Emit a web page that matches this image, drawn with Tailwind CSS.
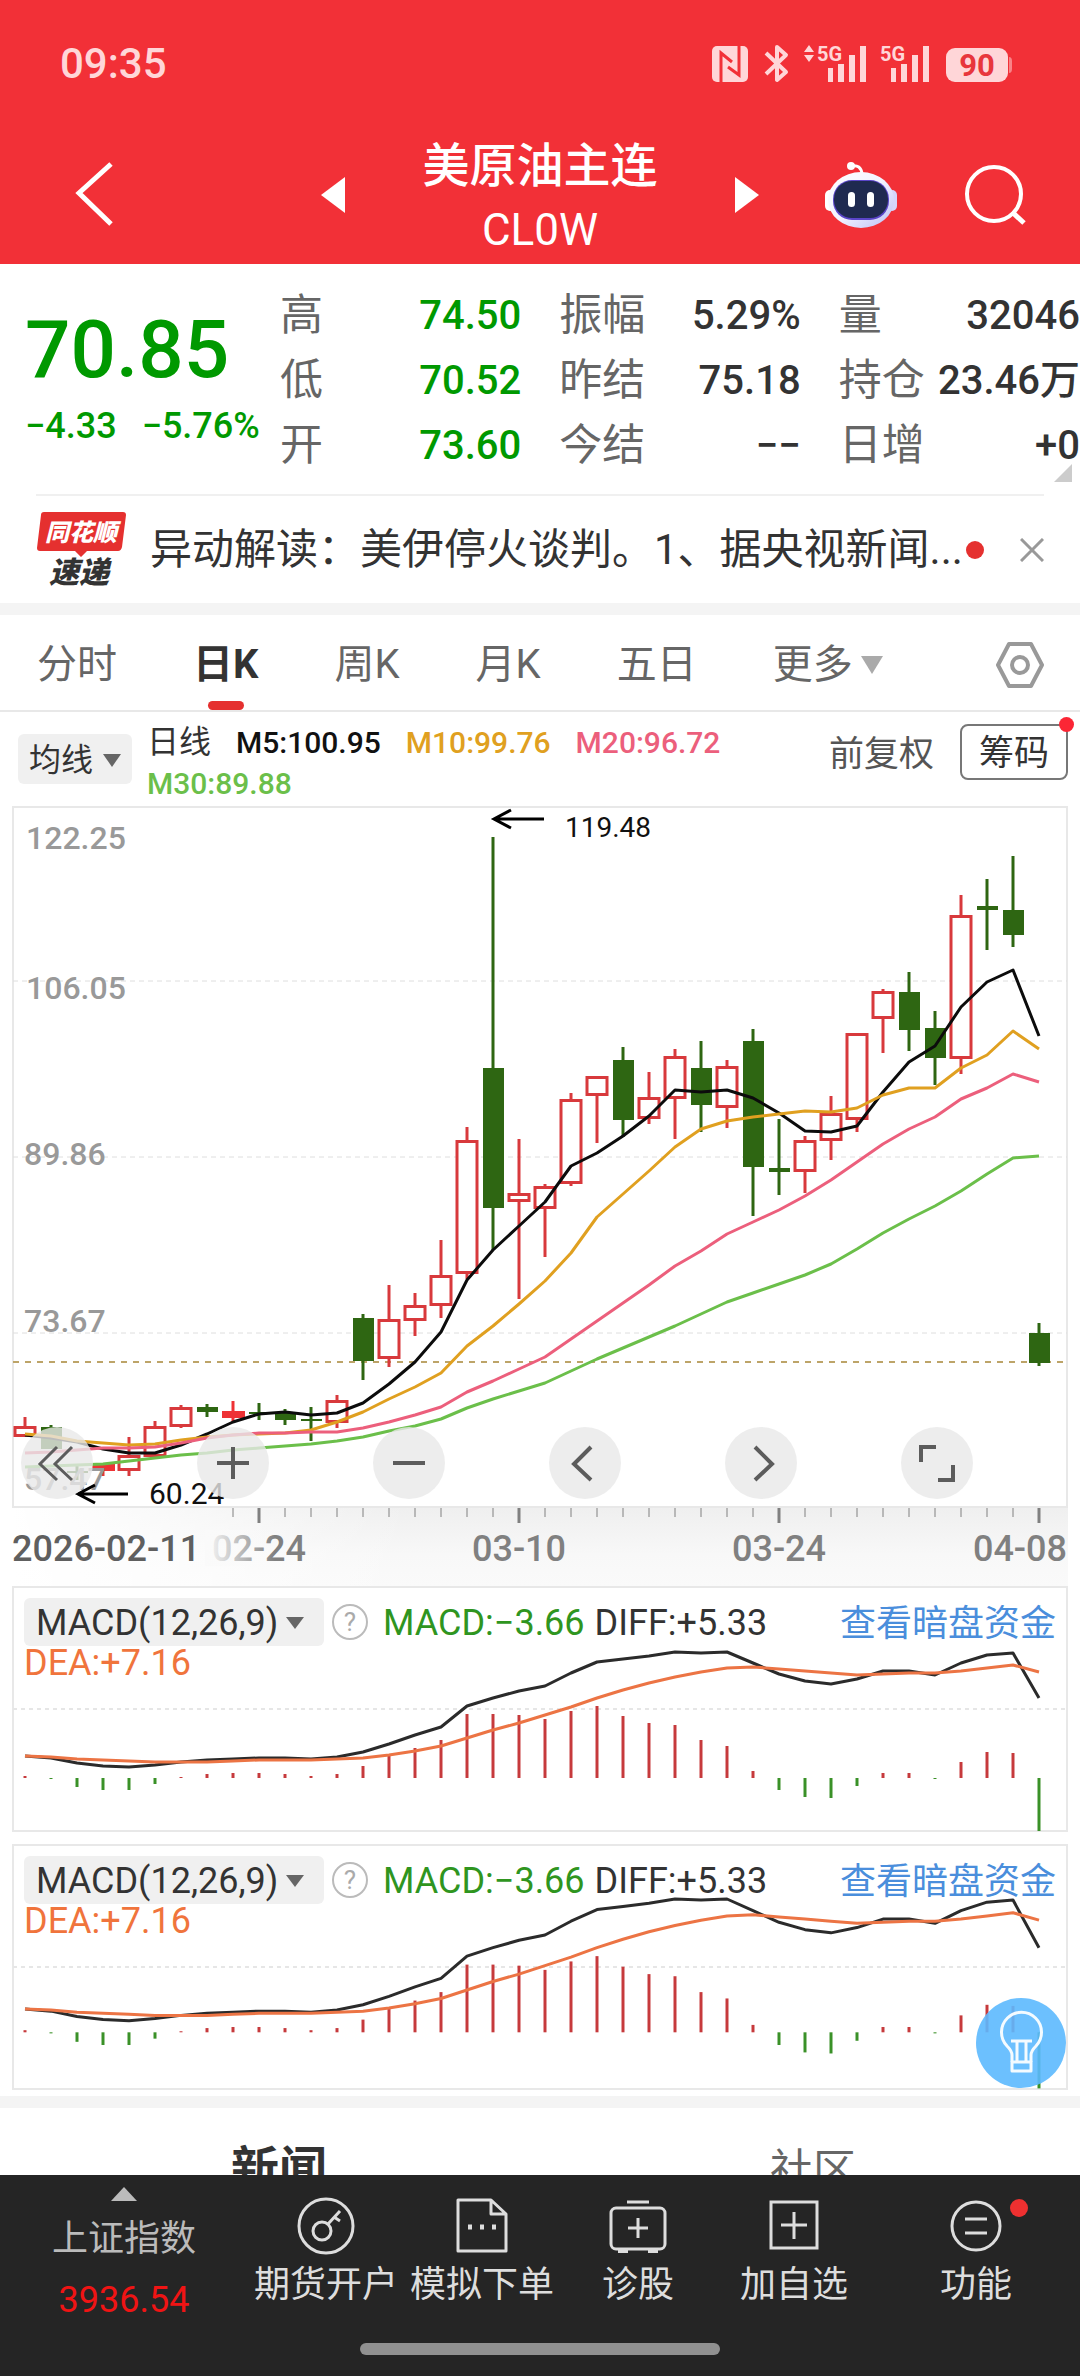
<!DOCTYPE html>
<html lang="zh-CN">
  <head>
    <meta charset="UTF-8" />
    <meta name="viewport" content="width=device-width, initial-scale=1.0" />
    <title>美原油主连 CL0W</title>
    <script src="https://cdn.jsdelivr.net/npm/@tailwindcss/browser@4"></script>
  </head>
  <body class="min-h-screen overflow-x-hidden bg-white font-['Roboto','Noto_Sans_CJK_SC',sans-serif] text-[#333]">
    <header class="h-[264px] bg-[#f23037] text-white">
      <!-- ステータスバー -->
      <div class="flex h-[128px] items-center justify-between pl-[60px] pr-[66px] text-[#ffd6d8]">
        <span class="text-[42px] font-medium leading-none">09:35</span>
        <svg class="h-[52px] w-[302px]" viewBox="712 38 302 52" fill="currentColor">
          <rect x="712" y="46" width="36" height="36" rx="5" />
          <path d="M721 82V53l11 9M739 46v29l-11-8" fill="none" stroke="#f23037" stroke-width="3" />
          <path d="M766 53l20 19-9 8V47l9 8-20 19" fill="none" stroke="currentColor" stroke-width="4" stroke-linejoin="round" />
          <path d="M804 52l5-7 5 7zM804 55l5 7 5-7z" />
          <text x="817" y="61" font-size="20" font-weight="700">5G</text>
          <path d="M828 68h5v14h-5zM838 64h6v18h-6zM849 55h6v27h-6zM860 46h6v36h-6z" />
          <text x="880" y="61" font-size="20" font-weight="700">5G</text>
          <path d="M891 68h5v14h-5zM901 64h6v18h-6zM912 55h6v27h-6zM923 46h6v36h-6z" />
          <rect x="946" y="48" width="62" height="34" rx="9" />
          <path d="M1009 57q3 0 3 4v8q0 4-3 4z" opacity=".5" />
          <text x="977" y="76" font-size="31" font-weight="700" text-anchor="middle" fill="#e8363c">90</text>
        </svg>
      </div>
      <div class="grid h-[130px] grid-cols-[300fr_480fr_300fr] items-center">
        <button aria-label="返回" class="ml-[70px] w-12">
          <svg class="h-[70px] w-12" viewBox="0 0 48 70" fill="none" stroke="currentColor" stroke-width="5"><path d="M41 4L9 33l32 31" /></svg>
        </button>
        <div class="flex items-center justify-between px-[21px]">
          <button aria-label="上一个"><svg class="h-9 w-6" viewBox="0 0 24 36" fill="currentColor"><path d="M24 0v36L0 18z" /></svg></button>
          <h1 class="pt-[6px] text-center text-[47px] font-medium leading-[64px]">
            美原油主连
            <span class="block text-[44px] font-normal">CL0W</span>
          </h1>
          <button aria-label="下一个"><svg class="h-9 w-6" viewBox="0 0 24 36" fill="currentColor"><path d="M0 0v36l24-18z" /></svg></button>
        </div>
        <div class="flex items-center justify-between pl-[44px] pr-[54px]">
          <button aria-label="智能助手">
            <svg class="h-[68px] w-[74px]" viewBox="0 0 74 68">
              <defs>
                <linearGradient id="shell" x1="0" y1="0" x2="1" y2="1">
                  <stop offset="0" stop-color="#fff" />
                  <stop offset=".5" stop-color="#f3f3ff" />
                  <stop offset="1" stop-color="#b9bdf6" />
                </linearGradient>
              </defs>
              <circle cx="27" cy="5" r="4" fill="#fff" />
              <path d="M27 5q10 -2 11 8" fill="none" stroke="#fff" stroke-width="3" />
              <rect x="1" y="29" width="10" height="21" rx="5" fill="#fff" />
              <rect x="63" y="29" width="10" height="21" rx="5" fill="#d6d6fb" />
              <ellipse cx="37" cy="39" rx="33" ry="28" fill="url(#shell)" />
              <rect x="9" y="19" width="56" height="40" rx="19" fill="#5a45c8" />
              <rect x="10" y="20" width="54" height="37" rx="18" fill="#1f2a50" />
              <rect x="24" y="31" width="7" height="15" rx="3.5" fill="#fff" />
              <rect x="43" y="31" width="7" height="15" rx="3.5" fill="#fff" />
            </svg>
          </button>
          <button aria-label="搜索">
            <svg class="h-16 w-[62px]" viewBox="0 0 62 64" fill="none" stroke="currentColor" stroke-width="4"><circle cx="30" cy="31" r="27" /><path d="M48 49l12 11" stroke-width="5" /></svg>
          </button>
        </div>
      </div>
    </header>

    <main class="pb-[170px]">
      <!-- 価格サマリー -->
      <section class="relative flex pt-[19px]">
        <div class="w-[280px] shrink-0 whitespace-nowrap pl-[25px] text-[#009900]">
          <p class="pt-[18px] text-[80px] font-medium leading-[98px]">70.85</p>
          <p class="flex gap-[25px] pt-[15px] text-[36px] font-medium leading-[24px]"><span>−4.33</span><span>−5.76%</span></p>
        </div>
        <div class="grid flex-1 grid-cols-3 gap-x-[38px] whitespace-nowrap text-[40px] font-medium leading-[65px]">
          <dl class="grid grid-cols-[auto_1fr] text-right text-[#009900]">
            <dt class="text-left text-[43px] font-normal text-[#666]">高</dt><dd>74.50</dd>
            <dt class="text-left text-[43px] font-normal text-[#666]">低</dt><dd>70.52</dd>
            <dt class="text-left text-[43px] font-normal text-[#666]">开</dt><dd>73.60</dd>
          </dl>
          <dl class="grid grid-cols-[auto_1fr] text-right">
            <dt class="text-left text-[43px] font-normal text-[#666]">振幅</dt><dd>5.29%</dd>
            <dt class="text-left text-[43px] font-normal text-[#666]">昨结</dt><dd>75.18</dd>
            <dt class="text-left text-[43px] font-normal text-[#666]">今结</dt><dd>−−</dd>
          </dl>
          <dl class="grid grid-cols-[auto_1fr] text-right">
            <dt class="text-left text-[43px] font-normal text-[#666]">量</dt><dd>32046</dd>
            <dt class="text-left text-[43px] font-normal text-[#666]">持仓</dt><dd>23.46万</dd>
            <dt class="text-left text-[43px] font-normal text-[#666]">日增</dt><dd>+0</dd>
          </dl>
        </div>
        <svg class="absolute -bottom-[4px] right-2 size-[18px]" viewBox="0 0 18 18" fill="#ccc"><path d="M18 0v18H0z" /></svg>
      </section>

      <!-- ニュース速報 -->
      <section class="mx-9 mt-[16px] flex h-[109px] items-center border-t-2 border-[#f0f0f0]">
        <svg class="h-[86px] w-[90px] shrink-0" viewBox="0 -4 90 86">
          <path d="M8 1h79q3 0 3 3l-4 32q-1 4-4 4H51l-6 6-6-6H4q-3 0-3-3L5 4q0-3 3-3z" fill="#e5302f" />
          <text x="45" y="30" font-size="24" font-weight="900" font-style="italic" text-anchor="middle" fill="#fff">同花顺</text>
          <text x="43" y="72" font-size="30" font-weight="900" font-style="italic" text-anchor="middle" fill="#333">速递</text>
        </svg>
        <a href="#" class="ml-[24px] flex-1 whitespace-nowrap text-[42px] leading-[60px]">异动解读：美伊停火谈判。1、据央视新闻...</a>
        <span class="size-[18px] shrink-0 rounded-full bg-[#e5302f]"></span>
        <button aria-label="关闭" class="ml-9 shrink-0">
          <svg class="size-6" viewBox="0 0 24 24" fill="none" stroke="#999" stroke-width="3"><path d="M1 1l22 22M23 1L1 23" /></svg>
        </button>
      </section>
      <div class="h-3 bg-[#f4f4f4]"></div>

      <!-- 期間タブ -->
      <nav class="flex h-[97px] items-stretch gap-[76px] border-b-2 border-[#e8e8e8] pl-[37px] pr-9 pt-1 text-[40px] text-[#666]">
        <button>分时</button>
        <button class="relative font-bold text-[#333]">日K<span class="absolute bottom-0 left-1/2 h-[9px] w-9 -translate-x-1/2 rounded-full bg-[#e5302f]"></span></button>
        <button>周K</button>
        <button>月K</button>
        <button>五日</button>
        <button class="flex items-center gap-2">更多<svg class="h-[18px] w-[22px]" viewBox="0 0 22 18" fill="#aaa"><path d="M0 0h22L11 18z" /></svg></button>
        <button aria-label="设置" class="ml-auto">
          <svg class="h-12 w-12" viewBox="0 0 48 48" fill="none" stroke="#999" stroke-width="4" stroke-linejoin="round"><path d="M13 3h22l11 21-11 21H13L2 24z" /><circle cx="24" cy="24" r="8" /></svg>
        </button>
      </nav>

      <!-- 移動平均の凡例 -->
      <div class="flex h-[94px] items-start pl-[18px] pr-3">
        <button class="mt-[22px] flex h-[50px] w-[114px] shrink-0 items-center justify-center gap-[10px] rounded-md bg-[#f0f0f0] pt-[2px] text-[32px]">均线<svg class="h-[13px] w-[18px]" viewBox="0 0 18 13" fill="#666"><path d="M0 0h18L9 13z" /></svg></button>
        <div class="ml-[15px] mt-[10px] flex flex-1 flex-wrap gap-x-[25px] whitespace-nowrap text-[30px] font-medium leading-[41px]">
          <span class="text-[32px] font-normal">日线</span>
          <span class="text-[#111]">M5:100.95</span>
          <span class="text-[#e0a020]">M10:99.76</span>
          <span class="text-[#ec5f7c]">M20:96.72</span>
          <span class="text-[#6bbf4a]">M30:89.88</span>
        </div>
        <button class="mt-[18px] text-[35px] leading-[50px] text-[#555]">前复权</button>
        <button class="relative ml-[26px] mt-[12px] h-[56px] w-[108px] rounded-lg border-2 border-[#777] pt-[2px] text-[35px] leading-none">筹码<span class="absolute -right-[8px] -top-[9px] size-[15px] rounded-full bg-[#fb2635]"></span></button>
      </div>

      <!-- ローソク足チャート -->
      <section class="relative mx-3">
        <svg id="kline" class="block h-auto w-full" viewBox="12 806 1056 702"></svg>
        <div class="absolute bottom-[9px] left-[9px] flex gap-[104px] text-[#5c5c5c]">
          <button aria-label="展开" class="size-[72px] rounded-full bg-[#e8e8e8]/80"><svg class="size-[72px]" viewBox="0 0 72 72" fill="none" stroke="currentColor" stroke-width="3"><path d="M36 20L19 37l17 16M51 20L34 37l17 16" /></svg></button>
          <button aria-label="放大" class="size-[72px] rounded-full bg-[#e8e8e8]/80"><svg class="size-[72px]" viewBox="0 0 72 72" fill="none" stroke="currentColor" stroke-width="4"><path d="M20 36h32M36 20v32" /></svg></button>
          <button aria-label="缩小" class="size-[72px] rounded-full bg-[#e8e8e8]/80"><svg class="size-[72px]" viewBox="0 0 72 72" fill="none" stroke="currentColor" stroke-width="4"><path d="M20 36h32" /></svg></button>
          <button aria-label="左移" class="size-[72px] rounded-full bg-[#e8e8e8]/80"><svg class="size-[72px]" viewBox="0 0 72 72" fill="none" stroke="currentColor" stroke-width="4"><path d="M42 20L25 37l17 16" /></svg></button>
          <button aria-label="右移" class="size-[72px] rounded-full bg-[#e8e8e8]/80"><svg class="size-[72px]" viewBox="0 0 72 72" fill="none" stroke="currentColor" stroke-width="4"><path d="M30 20l17 17-17 16" /></svg></button>
          <button aria-label="全屏" class="size-[72px] rounded-full bg-[#e8e8e8]/80"><svg class="size-[72px]" viewBox="0 0 72 72" fill="none" stroke="currentColor" stroke-width="4"><path d="M20 35V20h15M52 38v15H37" /></svg></button>
        </div>
      </section>
      <svg id="axis" class="mx-3 block h-auto w-[calc(100%-24px)]" viewBox="12 1508 1056 78"></svg>

      <!-- MACD -->
      <section class="relative mx-3">
        <svg class="macd block h-auto w-full" data-scale="1" data-top="66" viewBox="0 0 1056 246"></svg>
        <div class="absolute inset-x-3 top-3 whitespace-nowrap text-[36px]">
          <div class="flex h-12 items-center">
            <button class="flex h-12 w-[300px] items-center gap-2 rounded-md bg-[#f0f0f0] pl-3 pt-[2px]">MACD(12,26,9)<svg class="h-3 w-[18px]" viewBox="0 0 18 12" fill="#666"><path d="M0 0h18L9 12z" /></svg></button>
            <button aria-label="MACD说明" class="ml-2 size-9 rounded-full border-2 border-[#bbb] text-[26px] leading-none text-[#aaa]">?</button>
            <span class="ml-[15px] pt-[2px] text-[#2f951f]">MACD:−3.66</span>
            <span class="ml-[10px] pt-[2px]">DIFF:+5.33</span>
            <a href="#" class="ml-auto pt-[3px] text-[#4a8edc]">查看暗盘资金</a>
          </div>
          <p class="leading-[34px] text-[#f0743c]">DEA:+7.16</p>
        </div>
      </section>
      <section class="relative mx-3 mt-3">
        <svg class="macd block h-auto w-full" data-scale="1.058" data-top="55" viewBox="0 0 1056 246"></svg>
        <div class="absolute inset-x-3 top-3 whitespace-nowrap text-[36px]">
          <div class="flex h-12 items-center">
            <button class="flex h-12 w-[300px] items-center gap-2 rounded-md bg-[#f0f0f0] pl-3 pt-[2px]">MACD(12,26,9)<svg class="h-3 w-[18px]" viewBox="0 0 18 12" fill="#666"><path d="M0 0h18L9 12z" /></svg></button>
            <button aria-label="MACD说明" class="ml-2 size-9 rounded-full border-2 border-[#bbb] text-[26px] leading-none text-[#aaa]">?</button>
            <span class="ml-[15px] pt-[2px] text-[#2f951f]">MACD:−3.66</span>
            <span class="ml-[10px] pt-[2px]">DIFF:+5.33</span>
            <a href="#" class="ml-auto pt-[3px] text-[#4a8edc]">查看暗盘资金</a>
          </div>
          <p class="leading-[34px] text-[#f0743c]">DEA:+7.16</p>
        </div>
        <button aria-label="提示" class="absolute bottom-[2px] right-[2px] size-[90px] rounded-full bg-[#5cb9fe]/90">
          <svg class="size-[90px]" viewBox="0 0 90 90" fill="none" stroke="#f4fbff" stroke-width="3" stroke-linejoin="round"><path d="M36 64v-7q0-4-5-9a20 20 0 1 1 29 0q-5 5-5 9v7" /><path d="M36 64h19v9H36zM35 43h21M41 44v20M50 44v20" /></svg>
        </button>
      </section>
      <div class="mt-[6px] h-3 bg-[#f4f4f4]"></div>
      <div class="flex h-[92px] items-end pl-3">
        <button class="flex-1 text-[48px] font-bold leading-[60px]">新闻</button>
        <button class="flex-1 text-[43px] leading-[60px] text-[#666]">社区</button>
      </div>
    </main>

    <!-- 下部ナビ -->
    <footer class="fixed inset-x-0 bottom-0 h-[201px] bg-[#252525] text-[36px] leading-[50px] text-[#ddd]">
      <nav class="grid grid-cols-[248fr_156fr_156fr_156fr_156fr_208fr] whitespace-nowrap text-center">
        <a href="#" class="flex flex-col items-center text-[#bbb]">
          <svg class="mt-3 h-[14px] w-[26px]" viewBox="0 0 26 14" fill="#bbb"><path d="M13 0l13 14H0z" /></svg>
          <span class="mt-[13px]">上证指数</span>
          <span class="mt-[11px] text-[#f01414]">3936.54</span>
        </a>
        <a href="#" class="flex flex-col items-center pt-[21px]">
          <svg class="size-[60px]" viewBox="0 0 60 60" fill="none" stroke="currentColor" stroke-width="3"><circle cx="30" cy="30" r="27" /><circle cx="26" cy="35" r="9" /><path d="M32 28l12-13M38 21l6 4" /></svg>
          <span class="mt-[4px]">期货开户</span>
        </a>
        <a href="#" class="flex flex-col items-center pt-[21px]">
          <svg class="size-[60px]" viewBox="0 0 60 60" fill="none" stroke="currentColor" stroke-width="3" stroke-linejoin="round"><path d="M6 4h33l15 14v37H6zM39 4v14h15" /><path d="M16 31h4M28 31h4M40 31h4" stroke-width="5" /></svg>
          <span class="mt-[4px]">模拟下单</span>
        </a>
        <a href="#" class="flex flex-col items-center pt-[21px]">
          <svg class="size-[60px]" viewBox="0 0 60 60" fill="none" stroke="currentColor" stroke-width="3"><rect x="3" y="12" width="54" height="41" rx="5" /><path d="M19 6h22M30 22v20M20 32h20" /><path d="M10 55h10M40 55h10" stroke-width="4" /></svg>
          <span class="mt-[4px]">诊股</span>
        </a>
        <a href="#" class="flex flex-col items-center pt-[21px]">
          <svg class="size-[60px]" viewBox="0 0 60 60" fill="none" stroke="currentColor" stroke-width="3"><path d="M7 6h46v46H7zM30 16v27M17 29h26" /></svg>
          <span class="mt-[4px]">加自选</span>
        </a>
        <a href="#" class="flex flex-col items-center pt-[21px]">
          <span class="relative h-[60px]">
            <svg class="size-[60px]" viewBox="0 0 60 60" fill="none" stroke="currentColor" stroke-width="3"><circle cx="30" cy="30" r="24" /><path d="M19 23h22M19 37h22" /></svg>
            <span class="absolute -right-[22px] top-[3px] size-[18px] rounded-full bg-[#ee3030]"></span>
          </span>
          <span class="mt-[4px]">功能</span>
        </a>
      </nav>
      <div class="absolute bottom-[21px] left-1/2 h-3 w-1/3 -translate-x-1/2 rounded-full bg-[#919191]"></div>
    </footer>

    <script>
      const STEP = 26;
      const X0 = 25;

      // [種類, 高値, 実体上, 実体下, 安値]  r=陽線 f=塗りつぶし陽線 g=陰線
      const candles = [
        ["r", 1417, 1426, 1437, 1437], ["g", 1425, 1427, 1449, 1449],
        ["g", 1466, 1471, 1473, 1480], ["f", 1463, 1464, 1471, 1476],
        ["r", 1437, 1455, 1471, 1476], ["r", 1421, 1426, 1457, 1457],
        ["r", 1405, 1407, 1427, 1428], ["g", 1404, 1407, 1412, 1417],
        ["f", 1401, 1411, 1418, 1422], ["g", 1403, 1412, 1414, 1420],
        ["g", 1409, 1413, 1420, 1425], ["g", 1407, 1419, 1421, 1441],
        ["r", 1395, 1400, 1423, 1428], ["g", 1314, 1318, 1361, 1380],
        ["r", 1285, 1319, 1359, 1367], ["r", 1293, 1305, 1321, 1336],
        ["r", 1240, 1275, 1306, 1318], ["r", 1127, 1140, 1274, 1279],
        ["g", 837, 1068, 1208, 1250], ["r", 1139, 1193, 1202, 1299],
        ["r", 1184, 1186, 1209, 1257], ["r", 1093, 1099, 1184, 1186],
        ["r", 1076, 1076, 1096, 1143], ["g", 1047, 1060, 1120, 1137],
        ["r", 1072, 1097, 1119, 1124], ["r", 1049, 1056, 1099, 1139],
        ["g", 1041, 1068, 1105, 1132], ["r", 1060, 1066, 1108, 1128],
        ["g", 1029, 1041, 1167, 1216], ["g", 1119, 1168, 1172, 1195],
        ["r", 1136, 1140, 1172, 1193], ["r", 1096, 1113, 1141, 1160],
        ["r", 1033, 1033, 1120, 1132], ["r", 989, 991, 1019, 1053],
        ["g", 972, 992, 1030, 1051], ["g", 1011, 1028, 1058, 1085],
        ["r", 895, 915, 1059, 1074], ["g", 879, 906, 910, 950],
        ["g", 856, 910, 935, 947], ["g", 1323, 1333, 1363, 1366],
      ];

      const averages = [
        ["#6bbf4a", [1467, 1466, 1465, 1464, 1461, 1458, 1455, 1453, 1450, 1448, 1446, 1444, 1441, 1437, 1431, 1426, 1419, 1408, 1399, 1391, 1383, 1371, 1359, 1348, 1337, 1326, 1314, 1302, 1293, 1284, 1275, 1264, 1249, 1233, 1219, 1206, 1191, 1174, 1158, 1156]],
        ["#0c0c0c", [1435, 1438, 1442, 1449, 1453, 1453, 1445, 1434, 1422, 1414, 1412, 1415, 1413, 1403, 1384, 1362, 1332, 1280, 1250, 1226, 1202, 1166, 1153, 1136, 1116, 1090, 1092, 1090, 1098, 1113, 1131, 1132, 1126, 1092, 1062, 1046, 1007, 982, 970, 1036]],
        ["#e0a020", [1434, 1436, 1441, 1443, 1445, 1444, 1440, 1437, 1435, 1434, 1433, 1430, 1422, 1412, 1399, 1387, 1373, 1346, 1326, 1304, 1281, 1253, 1217, 1194, 1171, 1147, 1129, 1121, 1117, 1114, 1111, 1112, 1108, 1095, 1088, 1088, 1068, 1055, 1031, 1049]],
        ["#ec5f7c", [1453, 1452, 1450, 1448, 1448, 1447, 1443, 1438, 1435, 1433, 1433, 1432, 1432, 1428, 1422, 1415, 1407, 1392, 1381, 1369, 1357, 1339, 1321, 1303, 1285, 1266, 1251, 1234, 1222, 1210, 1196, 1180, 1162, 1144, 1129, 1117, 1099, 1088, 1074, 1082]],
      ];

      const diff = [169, 171, 176, 179, 180, 178, 175, 173, 172, 171, 171, 172, 170, 165, 157, 148, 140, 119, 111, 104, 99, 86, 75, 72, 69, 65, 66, 65, 76, 87, 94, 97, 92, 84, 84, 88, 76, 68, 66, 111];
      const dea = [169, 170, 172, 173, 174, 175, 175, 175, 174, 173, 173, 173, 172, 171, 168, 164, 159, 151, 143, 136, 128, 120, 111, 103, 96, 90, 85, 81, 80, 82, 84, 86, 88, 87, 86, 86, 84, 81, 78, 85];
      const bars = [2, -1, -9, -12, -12, -6, 1, 4, 5, 5, 4, 2, 4, 12, 22, 30, 38, 64, 64, 63, 59, 67, 72, 62, 55, 53, 38, 32, 7, -12, -19, -20, -8, 5, 5, -1, 16, 26, 25, -53];

      function line(x1, y1, x2, y2, color, width, dash) {
        return `<line x1="${x1}" y1="${y1}" x2="${x2}" y2="${y2}" stroke="${color}" stroke-width="${width}" stroke-dasharray="${dash || "none"}"/>`;
      }

      function polyline(values, x0, color, width) {
        const points = values.map((y, i) => `${x0 + i * STEP},${y}`).join(" ");
        return `<polyline points="${points}" fill="none" stroke="${color}" stroke-width="${width}" stroke-linejoin="round"/>`;
      }

      function text(x, y, value, size, color, extra) {
        return `<text x="${x}" y="${y}" font-size="${size}" fill="${color}" ${extra || ""}>${value}</text>`;
      }

      function drawKline() {
        let out = `<rect x="13" y="807" width="1054" height="700" fill="#fff" stroke="#e8e8e8" stroke-width="2"/>`;
        [981, 1157, 1333].forEach((y) => {
          out += line(13, y, 1067, y, "#dedede", 1, "5 4");
        });
        out += line(13, 1362, 1067, 1362, "#bda468", 2, "6 6");
        candles.forEach(([kind, high, top, bottom, low], i) => {
          const x = X0 + i * STEP;
          if (kind === "r") {
            out += line(x, high, x, top, "#d8393c", 3) + line(x, bottom, x, low, "#d8393c", 3);
            out += `<rect x="${x - 10}" y="${top + 1.5}" width="20" height="${bottom - top - 3}" fill="#fff" stroke="#d8393c" stroke-width="3"/>`;
          } else {
            const color = kind === "g" ? "#2e6612" : "#ee3235";
            const half = kind === "g" ? 10 : 11;
            out += line(x, high, x, low, color, 3);
            out += `<rect x="${x - half}" y="${top}" width="${half * 2 + 1}" height="${bottom - top}" fill="${color}"/>`;
          }
        });
        averages.forEach(([color, values]) => {
          out += polyline(values, X0, color, 3);
        });
        const medium = 'font-weight="500"';
        out += text(26, 849, "122.25", 32, "#999", medium);
        out += text(26, 999, "106.05", 32, "#999", medium);
        out += text(24, 1165, "89.86", 32, "#999", medium);
        out += text(24, 1332, "73.67", 32, "#999", medium);
        out += text(24, 1490, "57.47", 32, "#999", medium);
        out += `<path d="M544 819H494M511 810l-17 9 17 9M128 1494H78M95 1485l-17 9 17 9" fill="none" stroke="#000" stroke-width="3"/>`;
        out += text(565, 837, "119.48", 28, "#111");
        out += text(149, 1504, "60.24", 30, "#111");
        document.getElementById("kline").innerHTML = out;
      }

      function drawAxis() {
        let out = `<defs><linearGradient id="fall" x1="0" y1="0" x2="0" y2="1"><stop offset="0" stop-color="#efefef"/><stop offset=".6" stop-color="#f8f8f8"/><stop offset="1" stop-color="#fafafa"/></linearGradient>
          <linearGradient id="fade"><stop offset="0" stop-color="#fff"/><stop offset="1" stop-color="#fff" stop-opacity="0"/></linearGradient>
          <linearGradient id="cover"><stop offset="0" stop-color="#fafafa"/><stop offset="1" stop-color="#fafafa" stop-opacity="0"/></linearGradient></defs>
          <rect x="12" y="1508" width="1056" height="78" fill="url(#fall)"/><rect x="12" y="1508" width="400" height="78" fill="url(#fade)"/>`;
        for (let i = 8; i < 40; i++) {
          const x = X0 + i * STEP;
          out += i % 10 === 9 ? line(x, 1508, x, 1523, "#808080", 3) : line(x, 1508, x, 1517, "#808080", 1);
        }
        const medium = 'font-weight="500" text-anchor="middle"';
        out += text(259, 1561, "02-24", 36, "#808080", medium);
        out += `<rect x="205" y="1530" width="70" height="36" fill="url(#cover)"/>`;
        out += text(12, 1561, "2026-02-11", 36, "#5f5f5f", 'font-weight="500"');
        out += text(519, 1561, "03-10", 36, "#808080", medium);
        out += text(779, 1561, "03-24", 36, "#808080", medium);
        out += text(1067, 1561, "04-08", 36, "#808080", 'font-weight="500" text-anchor="end"');
        document.getElementById("axis").innerHTML = out;
      }

      function drawMacd(svg) {
        const scale = Number(svg.dataset.scale);
        const top = Number(svg.dataset.top);
        const fit = (y) => top + (y - 65) * scale;
        const zero = fit(191);
        let out = `<rect x="1" y="1" width="1054" height="244" fill="#fff" stroke="#e8e8e8" stroke-width="2"/>`;
        out += line(1, 123, 1055, 123, "#e6e6e6", 2, "4 4");
        bars.forEach((h, i) => {
          const x = 13 + i * STEP;
          out += line(x, zero, x, zero - h * scale, h > 0 ? "#c63a3c" : "#3a9128", 3);
        });
        out += polyline(diff.map(fit), 13, "#2b2b2b", 3);
        out += polyline(dea.map(fit), 13, "#ec7444", 3);
        svg.innerHTML = out;
      }

      drawKline();
      drawAxis();
      document.querySelectorAll(".macd").forEach(drawMacd);
    </script>
  </body>
</html>
